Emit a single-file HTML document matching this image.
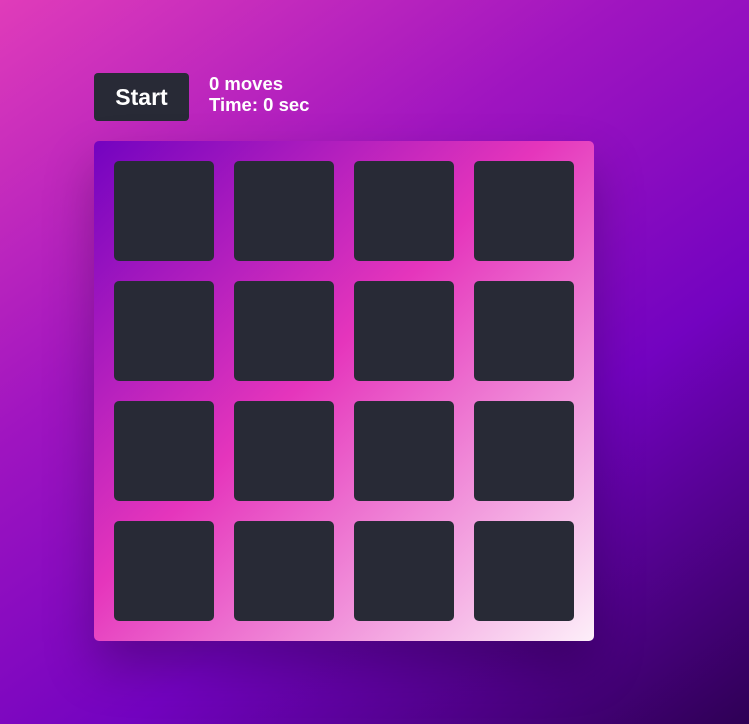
<!DOCTYPE html>
<html><head><style>
html,body{margin:0;padding:0;width:749px;height:724px;overflow:hidden}
body{background:linear-gradient(325deg,#2e0055 0%,#7303c0 35%,#a015c0 65%,#e03cba 100%);font-family:"Liberation Sans",sans-serif;position:relative}
.btn{position:absolute;left:94px;top:73px;width:95px;height:48px;background:#282a36;border-radius:4px;color:#fff;font-weight:bold;font-size:23px;line-height:48px;text-align:center}
.stats{position:absolute;left:209px;top:73px;color:#fff;font-weight:bold;font-size:18.5px;line-height:21px}
.board{position:absolute;left:94px;top:141px;width:500px;height:500px;border-radius:5px;background:linear-gradient(135deg,#7303c0 0%,#e535bc 45%,#fdeff9 100%);box-shadow:0 25px 50px rgba(0,0,0,.25)}
.c{position:absolute;width:100px;height:100px;background:#282a36;border-radius:5px}
</style></head><body>
<div class="btn">Start</div>
<div class="stats">0 moves<br>Time: 0 sec</div>
<div class="board">
<div class="c" style="left:20px;top:20px"></div><div class="c" style="left:140px;top:20px"></div><div class="c" style="left:260px;top:20px"></div><div class="c" style="left:380px;top:20px"></div>
<div class="c" style="left:20px;top:140px"></div><div class="c" style="left:140px;top:140px"></div><div class="c" style="left:260px;top:140px"></div><div class="c" style="left:380px;top:140px"></div>
<div class="c" style="left:20px;top:260px"></div><div class="c" style="left:140px;top:260px"></div><div class="c" style="left:260px;top:260px"></div><div class="c" style="left:380px;top:260px"></div>
<div class="c" style="left:20px;top:380px"></div><div class="c" style="left:140px;top:380px"></div><div class="c" style="left:260px;top:380px"></div><div class="c" style="left:380px;top:380px"></div>
</div>
</body></html>
